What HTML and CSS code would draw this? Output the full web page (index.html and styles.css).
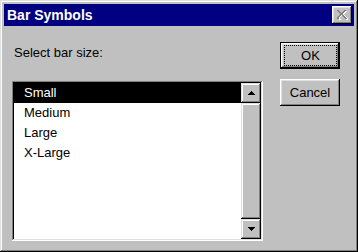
FILE: index.html
```html
<!DOCTYPE html>
<html>
<head>
<meta charset="utf-8">
<link rel="stylesheet" href="styles.css">
</head>
<body>
<div class="window">
  <div class="titlebar">
    <span class="title">Bar Symbols</span>
    <button class="close" aria-label="Close">
      <svg width="11" height="10" viewBox="0 0 11 10" shape-rendering="crispEdges">
        <g fill="#fff">
          <rect x="1" y="1" width="2" height="1"/><rect x="8" y="1" width="2" height="1"/>
          <rect x="2" y="2" width="2" height="1"/><rect x="7" y="2" width="2" height="1"/>
          <rect x="3" y="3" width="2" height="1"/><rect x="6" y="3" width="2" height="1"/>
          <rect x="4" y="4" width="3" height="1"/>
          <rect x="3" y="5" width="2" height="1"/><rect x="6" y="5" width="2" height="1"/>
          <rect x="2" y="6" width="2" height="1"/><rect x="7" y="6" width="2" height="1"/>
          <rect x="1" y="7" width="2" height="1"/><rect x="8" y="7" width="2" height="1"/>
          <rect x="1" y="8" width="2" height="1"/><rect x="9" y="8" width="2" height="1"/>
          <rect x="2" y="9" width="2" height="1"/><rect x="9" y="9" width="2" height="1"/>
        </g>
        <g fill="#808080">
          <rect x="0" y="0" width="2" height="1"/><rect x="7" y="0" width="2" height="1"/>
          <rect x="1" y="1" width="2" height="1"/><rect x="6" y="1" width="2" height="1"/>
          <rect x="2" y="2" width="2" height="1"/><rect x="5" y="2" width="2" height="1"/>
          <rect x="3" y="3" width="3" height="1"/>
          <rect x="3" y="4" width="3" height="1"/>
          <rect x="2" y="5" width="2" height="1"/><rect x="5" y="5" width="2" height="1"/>
          <rect x="1" y="6" width="2" height="1"/><rect x="6" y="6" width="2" height="1"/>
          <rect x="0" y="7" width="2" height="1"/><rect x="7" y="7" width="2" height="1"/>
          <rect x="0" y="8" width="2" height="1"/><rect x="8" y="8" width="2" height="1"/>
        </g>
      </svg>
    </button>
  </div>
  <div class="content">
    <div class="left">
      <div class="label">Select bar size:</div>
      <div class="listbox">
        <ul class="items">
          <li class="sel">Small</li>
          <li>Medium</li>
          <li>Large</li>
          <li>X-Large</li>
        </ul>
        <div class="scrollbar">
          <div class="sb-btn">
            <svg width="7" height="4" viewBox="0 0 7 4" shape-rendering="crispEdges" fill="#000">
              <rect x="3" y="0" width="1" height="1"/><rect x="2" y="1" width="3" height="1"/>
              <rect x="1" y="2" width="5" height="1"/><rect x="0" y="3" width="7" height="1"/>
            </svg>
          </div>
          <div class="thumb"></div>
          <div class="sb-btn">
            <svg width="7" height="4" viewBox="0 0 7 4" shape-rendering="crispEdges" fill="#000">
              <rect x="0" y="0" width="7" height="1"/><rect x="1" y="1" width="5" height="1"/>
              <rect x="2" y="2" width="3" height="1"/><rect x="3" y="3" width="1" height="1"/>
            </svg>
          </div>
        </div>
      </div>
    </div>
    <div class="buttons">
      <button class="btn default"><span class="focus">OK</span></button>
      <button class="btn">Cancel</button>
    </div>
  </div>
</div>
</body>
</html>
```

FILE: styles.css
```css
* {
  box-sizing: border-box;
  margin: 0;
  padding: 0;
}

body {
  margin: 0;
  background: #c0c0c0;
  font-family: "Liberation Sans", Arial, sans-serif;
  font-size: 13px;
  color: #000;
}

.window {
  width: 358px;
  height: 252px;
  background: #c0c0c0;
  padding: 4px;
  box-shadow: inset -1px -1px #000, inset 1px 1px #dfdfdf, inset -2px -2px #808080, inset 2px 2px #fff;
  display: flex;
  flex-direction: column;
}

.titlebar {
  height: 22px;
  background: #000080;
  display: flex;
  align-items: center;
  justify-content: space-between;
  padding: 0 2px 0 3px;
}

.title {
  color: #fff;
  font-weight: bold;
  font-size: 14px;
}

.close {
  width: 20px;
  height: 18px;
  border: none;
  background: #c0c0c0;
  box-shadow: inset -1px -1px #000, inset 1px 1px #fff, inset -2px -2px #808080, inset 2px 2px #dfdfdf;
  display: flex;
  align-items: center;
  justify-content: center;
  padding: 0 0 1px 1px;
}

.content {
  display: flex;
  padding: 16px 0 0 8px;
}

.left {
  width: 251px;
}

.label {
  margin: 3px 0 0 2px;
  line-height: 15px;
}

.listbox {
  margin-top: 21px;
  height: 160px;
  display: flex;
  padding: 2px;
  background: #fff;
  box-shadow: inset -1px -1px #fff, inset 1px 1px #808080, inset -2px -2px #dfdfdf, inset 2px 2px #000;
}

.items {
  list-style: none;
  flex: 1;
}

.items li {
  height: 20px;
  line-height: 20px;
  padding-left: 10px;
}

.items .sel {
  background: #000;
  color: #fff;
}

.scrollbar {
  width: 20px;
  display: flex;
  flex-direction: column;
}

.sb-btn,
.thumb {
  background: #c0c0c0;
  box-shadow: inset -1px -1px #000, inset 1px 1px #dfdfdf, inset -2px -2px #808080, inset 2px 2px #fff;
}

.sb-btn {
  height: 20px;
  display: flex;
  align-items: center;
  justify-content: center;
}

.thumb {
  flex: 1;
}

.buttons {
  margin-left: 17px;
  display: flex;
  flex-direction: column;
  gap: 10px;
}

.btn {
  width: 60px;
  height: 27px;
  border: none;
  background: #c0c0c0;
  font: inherit;
  color: #000;
  box-shadow: inset -1px -1px #000, inset 1px 1px #fff, inset -2px -2px #808080, inset 2px 2px #dfdfdf;
}

.btn.default {
  padding: 3px 3px 3px 4px;
  box-shadow: inset -1px -1px #000, inset 1px 1px #000, inset -2px -2px #000, inset 2px 2px #fff, inset -3px -3px #808080, inset 3px 3px #dfdfdf;
}

.focus {
  display: flex;
  width: 100%;
  height: 100%;
  align-items: center;
  justify-content: center;
  border: 1px dotted #000;
}
```
